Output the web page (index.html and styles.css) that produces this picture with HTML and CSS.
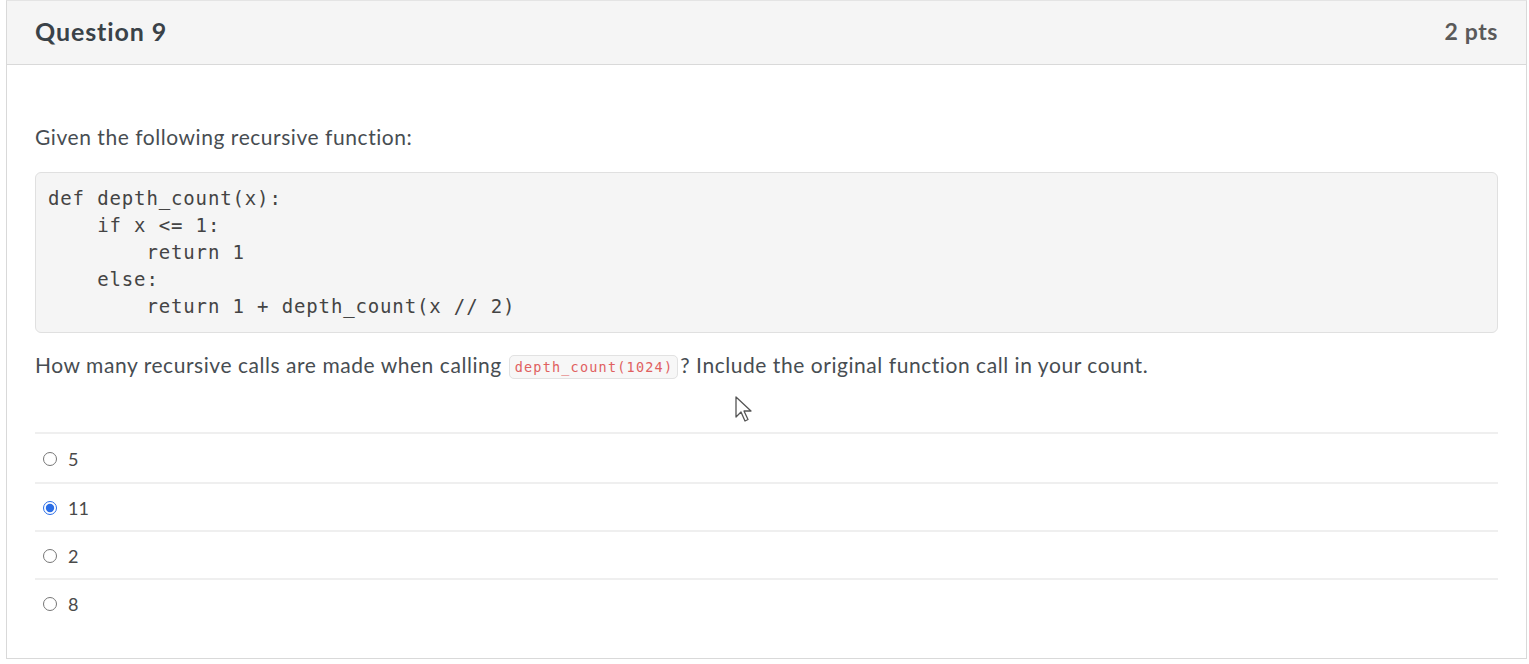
FILE: index.html
```html
<!DOCTYPE html>
<html lang="en">
<head>
    <meta charset="UTF-8">
    <title>Question 9</title>
    <link rel="stylesheet" href="styles.css">
</head>
<body>
    <div class="question">
        <div class="question-header">
            <h2>Question 9</h2>
            <span class="points">2 pts</span>
        </div>
        <div class="question-body">
            <p class="prompt">Given the following recursive function:</p>
<pre class="code">def depth_count(x):
    if x &lt;= 1:
        return 1
    else:
        return 1 + depth_count(x // 2)</pre>
            <p class="prompt ask">How many recursive calls are made when calling <code>depth_count(1024)</code>? Include the original function call in your count.</p>
            <div class="cursor-spot">
                <svg class="cursor" width="20" height="28" viewBox="0 0 20 28"><path d="M2 1 L2 21 L7 16 L11 25 L14 23.5 L10 15 L17 15 Z" fill="#fff" stroke="#555" stroke-width="1.3" stroke-linejoin="round"/></svg>
            </div>
            <ul class="answers">
                <li><label><input type="radio" name="q9"> 5</label></li>
                <li><label><input type="radio" name="q9" checked> 11</label></li>
                <li><label><input type="radio" name="q9"> 2</label></li>
                <li><label><input type="radio" name="q9"> 8</label></li>
            </ul>
        </div>
    </div>
</body>
</html>
```

FILE: styles.css
```css
body { margin: 0; padding: 0; background-color: #fff; font-family: Lato, "Open Sans", sans-serif; color: #2d3b45; }
.question { margin: 0 2px 0 6px; border: 1px solid #d9d9d9; border-top-color: #e4e4e4; height: 659px; box-sizing: border-box; }
.question-header { height: 64px; box-sizing: border-box; background-color: #f5f5f5; border-bottom: 1px solid #d9d9d9; display: flex; justify-content: space-between; align-items: center; padding: 0 28px 4px; }
.question-header h2 { margin: 0; font-size: 25px; font-weight: bold; letter-spacing: 0.9px; color: #3a4248; }
.points { font-size: 23px; font-weight: bold; letter-spacing: 0.6px; color: #5a5a5a; }
.question-body { padding: 58px 28px 0; }
.prompt { margin: 0; font-size: 21px; letter-spacing: 0.55px; line-height: 28px; color: #474d52; }
.code { margin: 21px 0 0; padding: 12px 12px 12px 12px; background-color: #f5f5f5; border: 1px solid #e0e0e0; border-radius: 6px; font-family: "DejaVu Sans Mono", monospace; font-size: 19px; letter-spacing: 0.86px; line-height: 27px; color: #444; }
.ask { margin-top: 18px; }
.ask code { font-family: "DejaVu Sans Mono", monospace; font-size: 13.5px; letter-spacing: 1.2px; color: #e06060; background-color: #f7f7f7; border: 1px solid #e2e2e2; border-radius: 5px; padding: 3px 4px 3px 5px; margin: 0 2px 0 1px; position: relative; top: -1px; }
.cursor-spot { height: 50px; position: relative; }
.cursor { position: absolute; left: 699px; top: 14px; }
.answers { list-style: none; margin: 0; padding: 0; }
.answers li { border-top: 2px solid #efefef; height: 44px; display: flex; align-items: center; padding-top: 2px; }
.answers li:nth-child(1) { height: 46px; }
.answers label { font-size: 18px; color: #4a4a4a; display: flex; align-items: center; }
.answers input { margin: 0 11px 0 8px; width: 14px; height: 14px; accent-color: #2a6de6; }
```
